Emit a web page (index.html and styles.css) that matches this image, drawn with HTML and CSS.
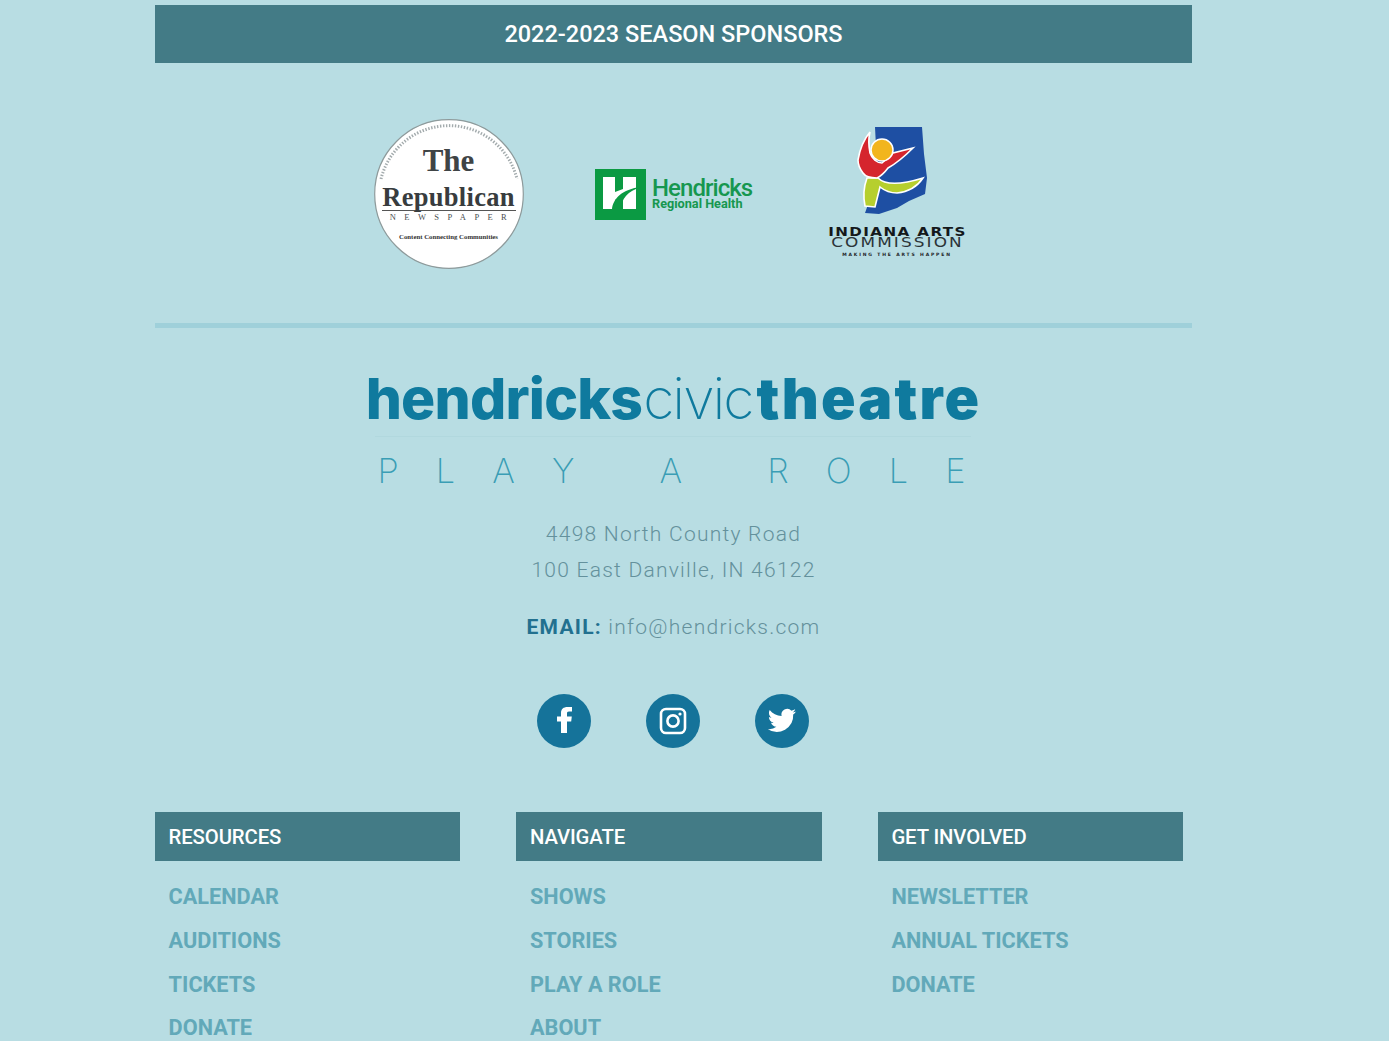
FILE: index.html
```html
<!DOCTYPE html>
<html lang="en">
<head>
<meta charset="utf-8">
<title>Hendricks Civic Theatre</title>
<link rel="stylesheet" href="styles.css">
</head>
<body>
<main class="page">
  <h2 class="season">2022-2023 SEASON SPONSORS</h2>
  <section class="sponsors">
    <div class="republican">
      <svg class="arc" viewBox="0 0 150 150" width="150" height="150" aria-hidden="true">
        <circle cx="75" cy="75" r="74.3" fill="#fff" stroke="#8e9a9b" stroke-width="1.2"/>
        <path d="M7 60A70 70 0 0 1 143 60" fill="none" stroke="#a3abad" stroke-width="3" stroke-dasharray="1.4 1.6"/>
      </svg>
      <div class="rep-the">The</div>
      <div class="rep-name">Republican</div>
      <div class="rep-news">NEWSPAPER</div>
      <div class="rep-tag">Content Connecting Communities</div>
    </div>
    <div class="hendricks">
      <svg class="h-mark" width="51" height="51" viewBox="0 0 51 51" aria-hidden="true">
        <rect width="51" height="51" fill="#0b9a43"/>
        <path d="M8 8H20V23L28 20V8H41V40H28V27L20 31V40H8z" fill="#fff"/>
        <path d="M17 40C18 30 27 20 46 18C33 22 26 30 26 40z" fill="#0b9a43"/>
      </svg>
      <div class="h-text">Hendricks<br>Regional Health</div>
    </div>
    <div class="indiana">
      <svg width="72" height="90" viewBox="-2 0 72 90" aria-hidden="true">
        <path d="M16 1H63L65 28L68 52L66 68L50 75L38 82L20 88L6 87L12 70L18 40z" fill="#1e4fa3"/>
        <path d="M8 52L19 52C25 58 38 60 64 52C58 61 48 66 38 67C32 67 26 65 21 61L16 81L6 80C4 70 5 60 8 52z" fill="#b6cf2e" stroke="#fff" stroke-width="1.6"/>
        <path d="M11 6C9 14 10 22 11 27C13 33 18 37 23 37C28 33 31 30 34 27L54 22C46 30 38 37 29 42C26 46 22 50 18 52C11 52 6 50 4 47C0 42 -1 38 -1 34C1 22 6 12 11 6z" fill="#d5252d" stroke="#fff" stroke-width="1.6"/>
        <circle cx="23" cy="24" r="11" fill="#f2b51d" stroke="#fff" stroke-width="1.5"/>
      </svg>
      <div class="ia-name">INDIANA ARTS<br>COMMISSION</div>
      <div class="ia-tag">MAKING THE ARTS HAPPEN</div>
    </div>
  </section>
  <hr class="rule">
  <section class="brand">
    <div class="wordmark"><b class="wm-a">hendricks</b><span class="wm-b">civic</span><b class="wm-c">theatre</b></div>
    <div class="tagline"><span>P</span><span>L</span><span>A</span><span>Y</span><span class="gap">A</span><span class="gap">R</span><span>O</span><span>L</span><span>E</span></div>
    <address class="address">4498 North County Road<br>100 East Danville, IN 46122</address>
    <p class="email"><strong>EMAIL:</strong> info@hendricks.com</p>
    <div class="social">
      <a class="circle" href="#" aria-label="Facebook">
        <svg width="54" height="54" viewBox="0 0 54 54"><path d="M24 39V27.5H20V22.5H24V19C24 15 26.5 13 30.5 13H35V17.5H32C30.3 17.5 30 18.4 30 19.7V22.5H34.8L34.2 27.5H30V39z" fill="#fff"/></svg>
      </a>
      <a class="circle" href="#" aria-label="Instagram">
        <svg width="54" height="54" viewBox="0 0 54 54"><rect x="15" y="15" width="24" height="24" rx="5" fill="none" stroke="#fff" stroke-width="2.6"/><circle cx="27" cy="27" r="5.6" fill="none" stroke="#fff" stroke-width="2.6"/><circle cx="34" cy="20" r="1.6" fill="#fff"/></svg>
      </a>
      <a class="circle" href="#" aria-label="Twitter">
        <svg width="54" height="54" viewBox="0 0 54 54"><path d="M41 17.6c-1 .5-2.1.8-3.3.9 1.2-.7 2.1-1.8 2.5-3.2-1.1.7-2.4 1.1-3.7 1.4a5.8 5.8 0 0 0-9.9 5.3c-4.8-.2-9.1-2.5-11.9-6a5.8 5.8 0 0 0 1.8 7.7c-.9 0-1.8-.3-2.6-.7 0 2.8 2 5.2 4.7 5.7-.9.2-1.7.3-2.6.1.7 2.3 2.9 4 5.4 4a11.6 11.6 0 0 1-8.5 2.4 16.4 16.4 0 0 0 25.3-14.6c1.1-.8 2.1-1.8 2.8-3z" fill="#fff"/></svg>
      </a>
    </div>
  </section>
  <section class="columns">
    <div class="col">
      <h3 class="col-head">RESOURCES</h3>
      <ul class="links">
        <li><a href="#">CALENDAR</a></li>
        <li><a href="#">AUDITIONS</a></li>
        <li><a href="#">TICKETS</a></li>
        <li><a href="#">DONATE</a></li>
      </ul>
    </div>
    <div class="col">
      <h3 class="col-head">NAVIGATE</h3>
      <ul class="links">
        <li><a href="#">SHOWS</a></li>
        <li><a href="#">STORIES</a></li>
        <li><a href="#">PLAY A ROLE</a></li>
        <li><a href="#">ABOUT</a></li>
      </ul>
    </div>
    <div class="col">
      <h3 class="col-head">GET INVOLVED</h3>
      <ul class="links">
        <li><a href="#">NEWSLETTER</a></li>
        <li><a href="#">ANNUAL TICKETS</a></li>
        <li><a href="#">DONATE</a></li>
      </ul>
    </div>
  </section>
</main>
</body>
</html>
```
FILE: styles.css
```css
* { box-sizing: border-box; }
html, body { margin: 0; height: 100%; overflow: hidden; }
body { background: #b8dde3; font-family: Roboto, "Liberation Sans", sans-serif; }
.page { width: 1037px; margin-left: 155px; padding-top: 5px; }
.season {
  margin: 0; height: 58px; background: #437b86; color: #fff;
  display: flex; align-items: center; justify-content: center;
  font-size: 23.5px; font-weight: 500;
}
.sponsors { display: flex; justify-content: center; align-items: center; gap: 71px; height: 260px; padding: 2px 8px 0 0; }
.republican { position: relative; width: 150px; height: 150px; text-align: center; color: #333; flex: none; font-family: "Liberation Serif", serif; }
.arc { position: absolute; left: 0; top: 0; }
.republican div { position: relative; }
.rep-the { padding-top: 24px; font-size: 31px; line-height: 36px; font-weight: 700; color: #3f4446; }
.rep-name { margin: 5px 8px 0; font-size: 26.5px; line-height: 26px; font-weight: 700; letter-spacing: .3px; color: #383c3e; border-bottom: 1px solid #555; white-space: nowrap; }
.rep-news { font-size: 8.5px; line-height: 12px; letter-spacing: 8.4px; margin-right: -8px; color: #4a5052; }
.rep-tag { font-size: 6.8px; line-height: 8px; font-weight: 700; margin-top: 10px; color: #333; white-space: nowrap; }
.hendricks { display: flex; align-items: center; gap: 6.5px; flex: none; width: 158px; }
.h-mark { flex: none; }
.h-text { color: #16974f; font-family: Roboto, sans-serif; font-weight: 700; font-size: 12.7px; line-height: 16px; white-space: nowrap; margin-top: 3px; }
.h-text::first-line { font-size: 24px; font-weight: 500; letter-spacing: -.95px; }
.indiana { width: 137px; text-align: center; margin: 0 0 3px 5px; flex: none; display: flex; flex-direction: column; align-items: center; color: #1d2226; font-family: "DejaVu Sans", sans-serif; }
.indiana svg { margin: 0 0 10px -9px; }
.ia-name { font-size: 14.5px; line-height: 11.5px; letter-spacing: 1.8px; color: #2c3438; white-space: nowrap; transform: scaleX(1.165); }
.ia-name::first-line { font-size: 13px; font-weight: 700; letter-spacing: 1.2px; color: #14181b; }
.ia-tag { font-size: 4.5px; line-height: 11px; font-weight: 700; letter-spacing: 1.85px; white-space: nowrap; }
.rule { margin: 0; border: 0; height: 5px; background: #9fd0da; }
.brand { display: flex; flex-direction: column; align-items: center; }
.wordmark {
  margin: 38px 2px 0 0; width: 596px; padding-bottom: 4px; border-bottom: 1px solid #b1d8de; color: #0f7a9e;
  font-family: Inter, "Liberation Sans", sans-serif; font-size: 57px; line-height: 66px; white-space: nowrap;
  display: flex; justify-content: center;
}
.wm-a { font-weight: 800; letter-spacing: -.8px; }
.wm-b { font-weight: 200; letter-spacing: -2px; margin: 0 4px 0 1px; }
.wm-c { font-weight: 900; letter-spacing: 2.2px; margin-right: -2px; }
.tagline {
  margin: 13px 0 0 -4px; width: 588px; display: flex; justify-content: space-between;
  color: #3a9db5; font-family: Inter, sans-serif; font-weight: 200; font-size: 34.4px; line-height: 41px;
}
.tagline .gap { margin-left: 48px; }
.address { margin-top: 26px; text-align: center; font-style: normal; color: #64919c; font-weight: 300; font-size: 21px; line-height: 35.5px; letter-spacing: 1.25px; }
.email { margin: 21px 0 0; color: #64919c; font-weight: 300; font-size: 21px; line-height: 36px; letter-spacing: 1.25px; }
.email strong { color: #22708f; font-weight: 700; }
.social { margin: 49px 0 0 -1px; display: flex; gap: 55px; }
.circle { width: 54px; height: 54px; border-radius: 50%; background: #15739a; display: block; }
.circle svg { display: block; }
.columns { margin-top: 64px; display: grid; grid-template-columns: repeat(3, 305.4px); column-gap: 56px; }
.col-head { margin: 0; height: 49px; padding-left: 13.6px; background: #437b86; color: #fff; display: flex; align-items: center; font-size: 20.3px; font-weight: 500; letter-spacing: -.1px; }
.links { list-style: none; margin: 14px 0 0; padding: 0 0 0 13.6px; }
.links li { height: 43.7px; display: flex; align-items: center; }
.links a { color: #62a9b9; text-decoration: none; font-size: 21.7px; font-weight: 700; }
```
